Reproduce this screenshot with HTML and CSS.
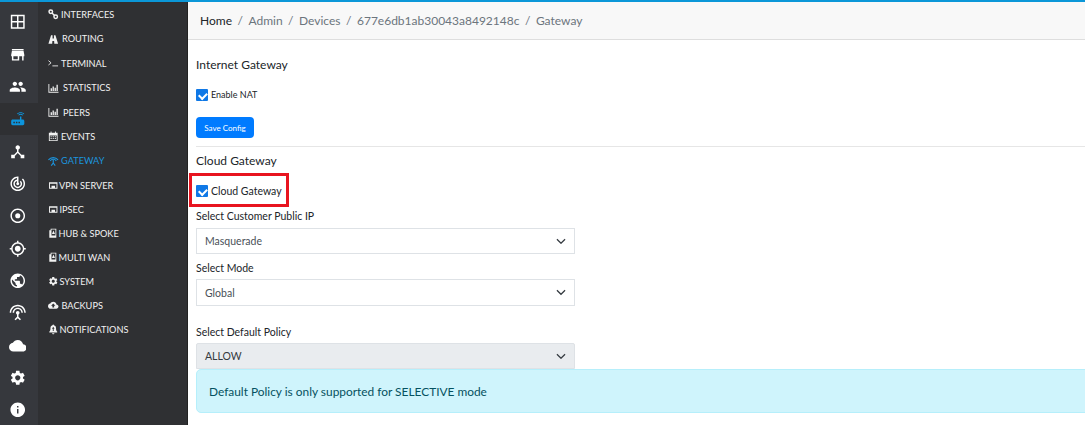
FILE: index.html
```html
<!DOCTYPE html>
<html lang="en">
<head>
<meta charset="utf-8">
<title>Gateway</title>
<link rel="stylesheet" href="styles.css">
</head>
<body>
<div class="topbar"></div>
<div class="shell">
  <nav class="rail">
    <a class="rail-item"><svg class="ri" viewBox="0 0 24 24"><path d="M2.500 2.500v19h19v-19zM11 19.500H4.500V13H11zm0-8.500H4.500V4.500H11zm8.500 8.500H13V13h6.500zm0-8.500H13V4.500h6.500z"/></svg></a>
    <a class="rail-item"><svg class="ri" viewBox="0 0 24 24"><path d="M20 4H4v2h16V4zm1 10v-2l-1-5H4l-1 5v2h1v6h10v-6h4v6h2v-6h1zm-9 4H6v-4h6v4z"/></svg></a>
    <a class="rail-item"><svg class="ri" viewBox="0 0 24 24"><path d="M16 11c1.660 0 2.990-1.340 2.990-3S17.660 5 16 5c-1.660 0-3 1.340-3 3s1.340 3 3 3zm-8 0c1.660 0 2.990-1.340 2.990-3S9.660 5 8 5C6.340 5 5 6.340 5 8s1.340 3 3 3zm0 2c-2.330 0-7 1.170-7 3.500V19h14v-2.500c0-2.330-4.670-3.500-7-3.500zm8 0c-.29 0-.62.02-.97.05 1.160.84 1.970 1.970 1.970 3.450V19h6v-2.500c0-2.330-4.670-3.500-7-3.500z"/></svg></a>
    <a class="rail-item active"><svg class="ri" viewBox="0 0 24 24"><path d="M20.200 5.900l.8-.8C19.600 3.700 17.800 3 16 3s-3.600.7-5 2.100l.8.8C13 4.800 14.500 4.200 16 4.200s3 .6 4.200 1.700zm-.9.8c-.9-.9-2.100-1.400-3.300-1.400s-2.400.5-3.300 1.400l.8.8c.7-.7 1.600-1 2.500-1 .9 0 1.800.3 2.500 1l.8-.8zM19 13h-2V9h-2v4H5c-1.100 0-2 .9-2 2v4c0 1.100.9 2 2 2h14c1.100 0 2-.9 2-2v-4c0-1.100-.9-2-2-2zM8 18H6v-2h2v2zm3.500 0h-2v-2h2v2zm3.500 0h-2v-2h2v2z"/></svg></a>
    <a class="rail-item"><svg class="ri" viewBox="0 0 24 24"><path d="M17 16l-4-4V8.820C14.160 8.400 15 7.300 15 6c0-1.660-1.340-3-3-3S9 4.340 9 6c0 1.300.84 2.400 2 2.820V12l-4 4H3v5h5v-3.050l4-4.200 4 4.200V21h5v-5h-4z"/></svg></a>
    <a class="rail-item"><svg class="ri" viewBox="0 0 24 24"><path d="M19.070 4.930l-1.410 1.410C19.100 7.790 20 9.790 20 12c0 4.420-3.580 8-8 8s-8-3.580-8-8c0-4.080 3.050-7.440 7-7.930v2.020C8.160 6.570 6 9.030 6 12c0 3.310 2.690 6 6 6s6-2.690 6-6c0-1.660-.67-3.160-1.760-4.240l-1.410 1.410C15.550 9.900 16 10.890 16 12c0 2.210-1.790 4-4 4s-4-1.790-4-4c0-1.860 1.280-3.410 3-3.860v2.140c-.6.35-1 .98-1 1.720 0 1.100.9 2 2 2s2-.9 2-2c0-.74-.4-1.380-1-1.720V2h-1C6.480 2 2 6.480 2 12s4.480 10 10 10 10-4.480 10-10c0-2.760-1.120-5.260-2.930-7.070z"/></svg></a>
    <a class="rail-item"><svg class="ri" viewBox="0 0 24 24"><path d="M12 8.500a3.500 3.500 0 1 0 0 7 3.500 3.500 0 0 0 0-7zm0-6.500C6.480 2 2 6.480 2 12s4.480 10 10 10 10-4.480 10-10S17.520 2 12 2zm0 18c-4.420 0-8-3.580-8-8s3.580-8 8-8 8 3.580 8 8-3.580 8-8 8z"/></svg></a>
    <a class="rail-item"><svg class="ri" viewBox="0 0 24 24"><path d="M12 8c-2.210 0-4 1.790-4 4s1.790 4 4 4 4-1.790 4-4-1.790-4-4-4zm8.940 3c-.46-4.170-3.770-7.480-7.940-7.940V1h-2v2.060C6.830 3.520 3.520 6.830 3.060 11H1v2h2.060c.46 4.170 3.770 7.480 7.940 7.940V23h2v-2.060c4.170-.46 7.480-3.770 7.940-7.940H23v-2h-2.060zM12 19c-3.870 0-7-3.130-7-7s3.130-7 7-7 7 3.130 7 7-3.130 7-7 7z"/></svg></a>
    <a class="rail-item"><svg class="ri" viewBox="0 0 24 24"><path d="M12 2C6.480 2 2 6.480 2 12s4.480 10 10 10 10-4.480 10-10S17.520 2 12 2zm-1 17.930c-3.950-.49-7-3.850-7-7.930 0-.62.08-1.210.21-1.790L9 15v1c0 1.100.9 2 2 2v1.930zm6.900-2.540c-.26-.81-1-1.390-1.900-1.390h-1v-3c0-.55-.45-1-1-1H8v-2h2c.55 0 1-.45 1-1V7h2c1.100 0 2-.9 2-2v-.41c2.930 1.190 5 4.060 5 7.410 0 2.080-.8 3.970-2.100 5.390z"/></svg></a>
    <a class="rail-item"><svg class="ri" viewBox="0 0 24 24"><path d="M12 5c-3.870 0-7 3.130-7 7h2c0-2.760 2.240-5 5-5s5 2.240 5 5h2c0-3.870-3.130-7-7-7zm1 9.290c.88-.39 1.500-1.260 1.500-2.290 0-1.380-1.120-2.500-2.500-2.500S9.500 10.620 9.500 12c0 1.020.62 1.900 1.500 2.290v3.300L7.590 21 9 22.410l3-3 3 3L16.410 21 13 17.590v-3.300zM12 1C5.930 1 1 5.930 1 12h2c0-4.970 4.030-9 9-9s9 4.030 9 9h2c0-6.070-4.930-11-11-11z"/></svg></a>
    <a class="rail-item"><svg class="ri" viewBox="0 0 24 24"><path d="M19.350 10.040C18.670 6.590 15.640 4 12 4 9.110 4 6.600 5.640 5.350 8.040 2.340 8.360 0 10.910 0 14c0 3.310 2.690 6 6 6h13c2.760 0 5-2.240 5-5 0-2.640-2.050-4.780-4.650-4.960z"/></svg></a>
    <a class="rail-item"><svg class="ri" viewBox="0 0 24 24"><path d="M19.140 12.940c.04-.3.06-.61.06-.94 0-.32-.02-.64-.07-.94l2.030-1.580c.18-.14.23-.41.12-.61l-1.920-3.320c-.12-.22-.37-.29-.59-.22l-2.390.96c-.5-.38-1.030-.7-1.620-.94l-.36-2.540c-.04-.24-.24-.41-.48-.41h-3.840c-.24 0-.43.17-.47.41l-.36 2.540c-.59.24-1.130.57-1.620.94l-2.390-.96c-.22-.08-.47 0-.59.22L2.740 8.870c-.12.21-.08.47.12.61l2.030 1.580c-.05.3-.09.63-.09.94s.02.64.07.94l-2.030 1.580c-.18.14-.23.41-.12.61l1.920 3.320c.12.22.37.29.59.22l2.390-.96c.5.38 1.030.7 1.620.94l.36 2.540c.05.24.24.41.48.41h3.840c.24 0 .44-.17.47-.41l.36-2.540c.59-.24 1.130-.56 1.620-.94l2.390.96c.22.08.47 0 .59-.22l1.920-3.320c.12-.22.07-.47-.12-.61l-2.010-1.580zM12 15.600c-1.980 0-3.600-1.620-3.600-3.600s1.620-3.600 3.600-3.600 3.600 1.620 3.600 3.600-1.620 3.600-3.600 3.600z"/></svg></a>
    <a class="rail-item"><svg class="ri" viewBox="0 0 24 24"><path d="M12 2C6.480 2 2 6.480 2 12s4.480 10 10 10 10-4.480 10-10S17.520 2 12 2zm1 15h-2v-6h2v6zm0-8h-2V7h2v2z"/></svg></a>
  </nav>
  <aside class="side">
    <a class="side-item g13"><svg class="si" viewBox="0 0 12 12"><g fill="none" stroke="currentColor" stroke-width="1.700"><circle cx="3.200" cy="3.200" r="2"/><circle cx="8.800" cy="8.800" r="2"/><path d="M4.500 4.500l3 3"/></g></svg>INTERFACES</a>
    <a class="side-item g14"><svg class="si" viewBox="0 0 12 12"><path d="M3.500 1.500h1.700v3.500h1.600V1.500h1.700L11.500 11H7.200L7 8H5l-.2 3H.5z"/></svg>ROUTING</a>
    <a class="side-item g13"><svg class="si" viewBox="0 0 12 12"><path d="M.5 3l3 2.500-3 2.500M5 9h6.500" fill="none" stroke="currentColor" stroke-width="1"/></svg>TERMINAL</a>
    <a class="side-item g15"><svg class="si" viewBox="0 0 12 12"><path d="M.5 1v10H12v-1H1.500V1zM3 6h1.500v3H3zm2.200-2h1.500v5H5.200zm2.300 1.500H9V9H7.500zm2.200-3.500h1.500v7H9.700z"/></svg>STATISTICS</a>
    <a class="side-item g15"><svg class="si" viewBox="0 0 12 12"><path d="M.5 1v10H12v-1H1.500V1zM3 6h1.500v3H3zm2.200-2h1.500v5H5.200zm2.300 1.500H9V9H7.500zm2.200-3.500h1.500v7H9.700z"/></svg>PEERS</a>
    <a class="side-item g13"><svg class="si" viewBox="0 0 12 12"><path fill-rule="evenodd" d="M1 2h2V.7h1V2h4V.7h1V2h2v9.500H1zm1 3v5.500h8V5zm1 .9h1.200v1.200H3zm2.400 0h1.200v1.200H5.400zm2.400 0H9v1.200H7.800zM3 8h1.200v1.200H3zm2.400 0h1.200v1.200H5.400zm2.400 0H9v1.200H7.800z"/></svg>EVENTS</a>
    <a class="side-item g13 current"><svg class="si" viewBox="0 0 12 12"><g fill="none" stroke="currentColor"><path stroke-width="1.200" d="M.5 4.500a7 7 0 0 1 11 0M2.500 5.500a4.500 4.500 0 0 1 7 0"/><path stroke-width="1.300" d="M6 4.500v3.500l-2.300 3M6 8l2.300 3"/></g></svg>GATEWAY</a>
    <a class="side-item g11"><svg class="si" viewBox="0 0 12 12"><path fill-rule="evenodd" d="M1.200 2.500h9.600v7.500H1.200zM2.300 4.300v4.600h1.700V6.500h4v2.400h1.700V4.300z"/></svg>VPN SERVER</a>
    <a class="side-item g115 short"><svg class="si" viewBox="0 0 12 12"><path fill-rule="evenodd" d="M1.200 2.500h9.600v7.500H1.200zM2.300 4.300v4.600h1.700V6.500h4v2.400h1.700V4.300z"/></svg>IPSEC</a>
    <a class="side-item g10 short"><svg class="si" viewBox="0 0 12 12"><path fill-rule="evenodd" d="M3 .8h6.500v10.400H1.500V2.500H3zm1 1v6.700h4.500V1.800zM6.200 2.800L8 6.800H4.500z"/></svg>HUB &amp; SPOKE</a>
    <a class="side-item g10 short"><svg class="si" viewBox="0 0 12 12"><path fill-rule="evenodd" d="M3 .8h6.500v10.400H1.500V2.500H3zm1 1v6.700h4.500V1.800zM6.200 2.800L8 6.800H4.500z"/></svg>MULTI WAN</a>
    <a class="side-item g115 short"><svg class="si" viewBox="0 0 24 24"><path d="M19.140 12.940c.04-.3.06-.61.06-.94 0-.32-.02-.64-.07-.94l2.030-1.580c.18-.14.23-.41.12-.61l-1.920-3.320c-.12-.22-.37-.29-.59-.22l-2.390.96c-.5-.38-1.030-.7-1.620-.94l-.36-2.540c-.04-.24-.24-.41-.48-.41h-3.840c-.24 0-.43.17-.47.41l-.36 2.540c-.59.24-1.130.57-1.620.94l-2.390-.96c-.22-.08-.47 0-.59.22L2.740 8.870c-.12.21-.08.47.12.61l2.030 1.580c-.05.3-.09.63-.09.94s.02.64.07.94l-2.030 1.580c-.18.14-.23.41-.12.61l1.920 3.320c.12.22.37.29.59.22l2.390-.96c.5.38 1.030.7 1.620.94l.36 2.540c.05.24.24.41.48.41h3.840c.24 0 .44-.17.47-.41l.36-2.540c.59-.24 1.130-.56 1.620-.94l2.390.96c.22.08.47 0 .59-.22l1.920-3.320c.12-.22.07-.47-.12-.61l-2.010-1.580zM12 15.600c-1.980 0-3.600-1.620-3.600-3.600s1.620-3.600 3.600-3.600 3.600 1.620 3.600 3.600-1.620 3.600-3.600 3.600z"/></svg>SYSTEM</a>
    <a class="side-item g135 short"><svg class="si" viewBox="0 0 24 24"><path fill-rule="evenodd" d="M19.350 10.040C18.670 6.590 15.640 4 12 4 9.110 4 6.600 5.640 5.350 8.040 2.340 8.360 0 10.910 0 14c0 3.310 2.690 6 6 6h13c2.760 0 5-2.240 5-5 0-2.640-2.050-4.780-4.650-4.960zM14 13v4h-4v-4H7l5-5 5 5z"/></svg>BACKUPS</a>
    <a class="side-item g115 short"><svg class="si" viewBox="0 0 12 12"><path fill-rule="evenodd" d="M6 .5c.5 0 .8.300.8.800 1.700.4 2.400 1.700 2.400 3.700 0 2 .6 3 1.300 3.700v1H1.500v-1c.7-.7 1.300-1.700 1.300-3.700 0-2 .7-3.300 2.400-3.700 0-.5.300-.8.800-.8zM6 3L4.500 5.500h1V8h1V5.500h1zM4.700 10.500h2.600C7.300 11.300 6.700 11.800 6 11.800s-1.300-.5-1.300-1.300z"/></svg>NOTIFICATIONS</a>
  </aside>
  <main class="main">
    <div class="crumbs">
      <span class="crumb-home">Home</span><span class="sep">/</span><span>Admin</span><span class="sep">/</span><span>Devices</span><span class="sep">/</span><span>677e6db1ab30043a8492148c</span><span class="sep">/</span><span>Gateway</span>
    </div>
    <div class="content">
      <h2 class="title first">Internet Gateway</h2>
      <label class="check small"><input type="checkbox" checked>Enable NAT</label>
      <button class="btn" type="button">Save Config</button>
      <hr class="rule">
      <h2 class="title second">Cloud Gateway</h2>
      <label class="check marked"><input type="checkbox" checked>Cloud Gateway<span class="redbox"></span></label>
      <div class="label l1">Select Customer Public IP</div>
      <div class="select">Masquerade<svg class="chev" viewBox="0 0 12 8"><path d="M1 1.500l5 5 5-5" fill="none" stroke="currentColor" stroke-width="1.500"/></svg></div>
      <div class="label l2">Select Mode</div>
      <div class="select tall">Global<svg class="chev" viewBox="0 0 12 8"><path d="M1 1.500l5 5 5-5" fill="none" stroke="currentColor" stroke-width="1.500"/></svg></div>
      <div class="label l3">Select Default Policy</div>
      <div class="select off">ALLOW<svg class="chev" viewBox="0 0 12 8"><path d="M1 1.500l5 5 5-5" fill="none" stroke="currentColor" stroke-width="1.500"/></svg></div>
      <div class="alert">Default Policy is only supported for SELECTIVE mode</div>
    </div>
  </main>
</div>
</body>
</html>
```
FILE: styles.css
```css
* { box-sizing: border-box; }
html, body { margin: 0; height: 425px; overflow: hidden; }
body { font-family: Lato, "Liberation Sans", sans-serif; background: #fff; color: #212529; }
.topbar { height: 2px; background: #0b97d8; }
.shell { display: flex; height: 423px; }

.rail { width: 38px; flex: none; background: #36383d; padding-top: 4px; }
.rail-item { display: flex; align-items: center; justify-content: center; height: 32.33px; color: #fff; padding-right: 3px; }
.rail-item.active { background: #2f3033; color: #0d94dc; }
.ri { width: 17.500px; height: 17.500px; fill: currentColor; display: block; }

.side { width: 150px; flex: none; background: #2f3033; border-right: 1px solid #222; padding: 0.4px 0 0 10px; }
.side-item { display: flex; align-items: center; height: 24.4px; font-size: 9.2px; color: #f2f2f2; white-space: nowrap; }
.side-item.short { height: 24px; }
.side-item.current { color: #1b95df; }
.si { width: 10.500px; height: 10.500px; fill: currentColor; flex: none; }
.g10 .si { margin-right: 0; }
.g11 .si { margin-right: 0.500px; }
.g115 .si { margin-right: 1px; }
.g13 .si { margin-right: 2.500px; }
.g135 .si { margin-right: 3px; }
.g14 .si { margin-right: 3.500px; }
.g15 .si { margin-right: 4.500px; }

.main { flex: 1; min-width: 0; overflow: hidden; }
.crumbs { display: flex; align-items: center; height: 38px; background: #f8f8f8; border-bottom: 1px solid #dedede; padding-left: 12px; font-size: 12px; color: #6c757d; }
.crumb-home { color: #212529; }
.sep { padding: 0 5.500px; }
.content { width: 900px; margin-left: 8px; }

.title { margin: 0; font-size: 12px; font-weight: 400; line-height: 16px; color: #212529; }
.title.first { padding-top: 17px; }
.title.second { margin-top: 6px; }
.check { display: flex; align-items: center; font-size: 10.500px; line-height: 14px; color: #212529; position: relative; }
.check input { appearance: none; position: relative; width: 12px; height: 12px; margin: 0 3px 0 0; background: #0f78e6; border-radius: 1px; flex: none; }
.check input::after { content: ""; position: absolute; left: 4px; top: 1.800px; width: 3.500px; height: 6px; border: solid #fff; border-width: 0 2px 2px 0; transform: rotate(45deg); }
.check.small { font-size: 9px; margin-top: 15px; }
.check.marked { margin-top: 15px; width: 92px; }
.redbox { position: absolute; left: -7px; top: -11px; width: 100px; height: 34px; border: 3px solid #e8141f; pointer-events: none; }
.btn { display: block; width: 58px; height: 21px; margin-top: 15px; padding: 0; border: 0; border-radius: 4px; background: #007bff; color: #fff; font: 400 8px Lato, sans-serif; }
.rule { margin: 8px 0 0; border: 0; border-top: 1px solid #e6e6e6; }

.label { font-size: 10.500px; line-height: 14px; color: #212529; }
.label.l1 { margin-top: 11px; }
.label.l2 { margin-top: 7px; }
.label.l3 { margin-top: 19px; }
.select { display: flex; align-items: center; justify-content: space-between; width: 379px; height: 26px; margin-top: 5px; padding: 0 8px; border: 1px solid #dee2e6; font-size: 10.500px; color: #495057; background: #fff; }
.select.tall { height: 27px; margin-top: 4px; }
.select.off { background: #e9ecef; border-radius: 2px 2px 0 0; color: #343a40; margin-top: 4px; }
.chev { width: 10px; height: 6.500px; color: #343a40; }
.alert { height: 44px; display: flex; align-items: center; padding-left: 12px; background: #cff4fc; border: 1px solid #b6effb; border-radius: 5px; font-size: 11.900px; color: #055160; }
```
